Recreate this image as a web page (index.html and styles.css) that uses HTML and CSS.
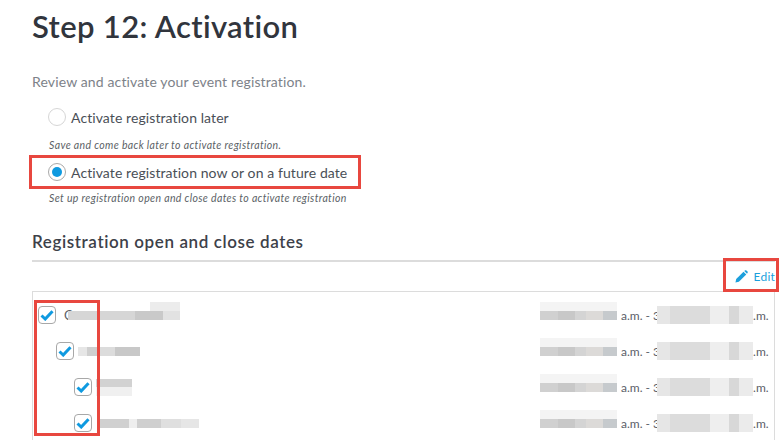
FILE: index.html
```html
<!DOCTYPE html>
<html lang="en">
<head>
    <meta charset="UTF-8">
    <meta name="viewport" content="width=device-width, initial-scale=1.0">
    <title>Step 12: Activation</title>
    <link rel="stylesheet" href="styles.css">
</head>
<body>

    <h1 class="page-title">Step 12: Activation</h1>
    <p class="intro">Review and activate your event registration.</p>

    <div class="option">
        <span class="radio"></span>
        <span class="option-label">Activate registration later</span>
    </div>
    <p class="hint hint-first">Save and come back later to activate registration.</p>
    <div class="option option-second">
        <span class="radio radio-on"></span>
        <span class="option-label">Activate registration now or on a future date</span>
    </div>
    <p class="hint">Set up registration open and close dates to activate registration</p>

    <h2 class="section-title">Registration open and close dates</h2>

    <div class="edit-row">
        <a class="edit-link" href="#">
            <svg class="pencil" viewBox="0 0 14 14" width="13" height="13">
                <path d="M0.5 13.5 L1.3 9.8 L9.2 1.9 L12.1 4.8 L4.2 12.7 Z" fill="#1b9fdc"/>
                <path d="M10 1.1 L11 0.4 Q11.7 0 12.3 0.5 L13.5 1.7 Q14 2.3 13.6 3 L12.9 4 Z" fill="#1b9fdc"/>
            </svg>
            Edit
        </a>
    </div>

    <div class="dates">
        <div class="date-row">
            <div class="name-cell">
                <span class="check"><svg viewBox="0 0 14 12" width="14" height="12"><path d="M1.5 6.5 L5.2 10 L12.5 2.2" class="tick"/></svg></span>
                <span class="name-letter">C</span>
                <span class="smudge smudge-a"></span>
            </div>
            <div class="time-cell">
                <span class="smudge smudge-date"></span>
                <span>a.m. - 3</span>
                <span class="smudge smudge-time"></span>
                <span>.m.</span>
            </div>
        </div>
        <div class="date-row level-1">
            <div class="name-cell">
                <span class="check"><svg viewBox="0 0 14 12" width="14" height="12"><path d="M1.5 6.5 L5.2 10 L12.5 2.2" class="tick"/></svg></span>
                <span class="smudge smudge-b"></span>
            </div>
            <div class="time-cell">
                <span class="smudge smudge-date"></span>
                <span>a.m. - 3</span>
                <span class="smudge smudge-time"></span>
                <span>.m.</span>
            </div>
        </div>
        <div class="date-row level-2">
            <div class="name-cell">
                <span class="check"><svg viewBox="0 0 14 12" width="14" height="12"><path d="M1.5 6.5 L5.2 10 L12.5 2.2" class="tick"/></svg></span>
                <span class="smudge smudge-c"></span>
            </div>
            <div class="time-cell">
                <span class="smudge smudge-date"></span>
                <span>a.m. - 3</span>
                <span class="smudge smudge-time"></span>
                <span>.m.</span>
            </div>
        </div>
        <div class="date-row level-2">
            <div class="name-cell">
                <span class="check"><svg viewBox="0 0 14 12" width="14" height="12"><path d="M1.5 6.5 L5.2 10 L12.5 2.2" class="tick"/></svg></span>
                <span class="smudge smudge-d"></span>
            </div>
            <div class="time-cell">
                <span class="smudge smudge-date"></span>
                <span>a.m. - 3</span>
                <span class="smudge smudge-time"></span>
                <span>.m.</span>
            </div>
        </div>
    </div>

    <!-- red annotation boxes drawn over the screenshot -->
    <div class="mark mark-radio"></div>
    <div class="mark mark-edit"></div>
    <div class="mark mark-checks"></div>

</body>
</html>
```

FILE: styles.css
```css
html, body {
    height: 440px;
    overflow: hidden;
}
body {
    position: relative;
    margin: 0;
    padding: 0 7px 0 32px;
    background: #fff;
    font-family: Lato, "Open Sans", sans-serif;
    color: #4a4f57;
}
.page-title {
    margin: 0;
    padding-top: 8px;
    font-size: 31px;
    line-height: 36px;
    font-weight: 600;
    letter-spacing: 0.35px;
    color: #31353d;
}
.intro {
    margin: 29px 0 0;
    font-size: 14px;
    line-height: 18px;
    letter-spacing: 0.14px;
    color: #7d8289;
}
.option {
    display: flex;
    align-items: center;
    gap: 5px;
    margin: 16px 0 0 16px;
    height: 20px;
}
.option-second {
    margin-top: 10px;
}
.radio {
    width: 18px;
    height: 18px;
    border: 1px solid #d6d6d6;
    border-radius: 50%;
    display: flex;
    align-items: center;
    justify-content: center;
    box-sizing: border-box;
}
.radio-on {
    border-color: #a9a9a9;
}
.radio-on::after {
    content: "";
    width: 10px;
    height: 10px;
    border-radius: 50%;
    background: #0f9ae0;
}
.option-label {
    font-size: 14px;
    letter-spacing: 0.09px;
    color: #4a4f57;
}
.hint {
    margin: 9px 0 0 17px;
    font-size: 10.5px;
    line-height: 14px;
    font-style: italic;
    letter-spacing: 0.36px;
    color: #5b5f66;
}
.hint-first {
    margin-top: 11px;
}
.section-title {
    margin: 27px 0 0;
    padding-bottom: 8px;
    border-bottom: 2px solid #dcdcdc;
    font-size: 17px;
    line-height: 20px;
    font-weight: 600;
    letter-spacing: 0.6px;
    color: #3d4149;
}
.edit-row {
    display: flex;
    justify-content: flex-end;
    height: 29px;
    align-items: center;
}
.edit-link {
    display: flex;
    align-items: center;
    gap: 6px;
    font-size: 12px;
    letter-spacing: 0.2px;
    color: #1b9fdc;
    text-decoration: none;
}
.dates {
    border: 1px solid #dcdcdc;
    border-bottom: none;
    padding: 5px 5px 0 5px;
}
.date-row {
    display: flex;
    justify-content: space-between;
    align-items: center;
    height: 36px;
}
.name-cell {
    display: flex;
    align-items: center;
    gap: 8px;
}
.level-1 .name-cell {
    padding-left: 18px;
    gap: 4px;
}
.level-2 .name-cell {
    padding-left: 36px;
    gap: 4px;
}
.check {
    width: 18px;
    height: 18px;
    box-sizing: border-box;
    border: 1px solid #a8a8a8;
    border-radius: 4px;
    display: flex;
    align-items: center;
    justify-content: center;
    background: #fff;
}
.tick {
    fill: none;
    stroke: #0f9ae0;
    stroke-width: 3;
}
.name-letter {
    font-size: 13px;
    color: #5b5f66;
}
.smudge {
    display: block;
    flex: none;
    height: 9px;
    background-color: #d2d2d2;
}
.smudge-a {
    width: 112px;
    height: 18px;
    margin: 0 0 8px -13px;
    background: linear-gradient(90deg, transparent 0 73%, #ececec 73%) top / 100% 50% no-repeat,
        linear-gradient(90deg, #d6d6d6 0 60%, #c9c9c9 60% 85%, #e2e2e2 85%) bottom / 100% 50% no-repeat;
    background-color: transparent;
}
.smudge-b {
    width: 62px;
    background-image: linear-gradient(90deg, #e6e6e6 0 15%, #cfcfcf 15% 35%, #dcdcdc 35% 60%, #c8c8c8 60%);
}
.smudge-c {
    width: 36px;
    height: 17px;
    background-image: linear-gradient(180deg, #d2d2d2 0 50%, #f0f0f0 50%);
}
.smudge-d {
    width: 100px;
    margin-left: 3px;
    background-image: linear-gradient(90deg, #d0d0d0 0 30%, #eeeeee 30% 38%, #cfcfcf 38% 62%, #dfdfdf 62% 82%, #e6e6e6 82%);
}
.time-cell {
    display: flex;
    align-items: center;
    width: 229px;
    font-size: 12px;
    white-space: nowrap;
    color: #5b6068;
}
.smudge-date {
    width: 77px;
    height: 18px;
    margin: 0 4px 8px 0;
    background: linear-gradient(180deg, #f4f4f4 0 50%, transparent 50%),
        linear-gradient(90deg, #d0d0d0 0 24%, #c8c8c8 24% 45%, #d4d4d4 45% 60%, #dcdad8 60% 82%, #c6cacd 82%);
}
.smudge-time {
    width: 96px;
    height: 18px;
    margin-left: -3px;
    background: linear-gradient(90deg, #e6e6e6 0 14%, #dcdcdc 14% 55%, #eeeeee 55% 75%, #d8d8d8 75% 85%, #ebebeb 85%);
}
.mark {
    position: absolute;
    box-sizing: border-box;
    border: 3px solid #e8473f;
}
.mark-radio {
    left: 29px;
    top: 155px;
    width: 332px;
    height: 34px;
}
.mark-edit {
    left: 723px;
    top: 258px;
    width: 56px;
    height: 34px;
}
.mark-checks {
    left: 34px;
    top: 300px;
    width: 66px;
    height: 136px;
}
```
